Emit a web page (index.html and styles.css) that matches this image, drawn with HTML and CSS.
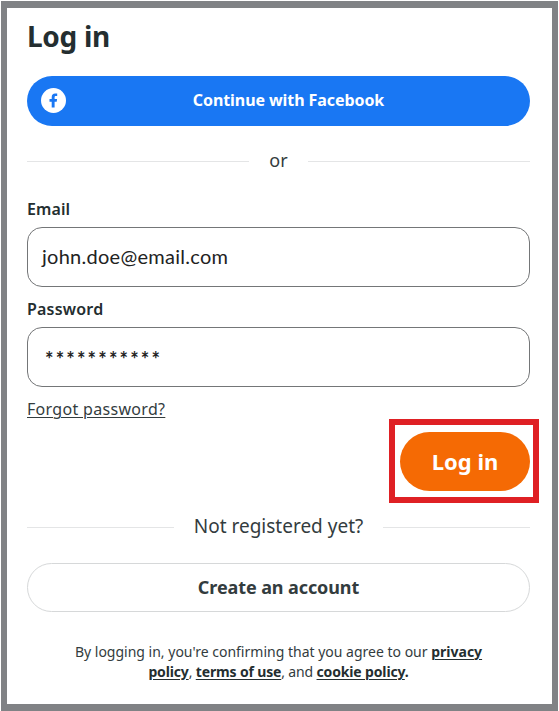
FILE: index.html
```html
<!DOCTYPE html>
<html lang="en">
<head>
<meta charset="utf-8">
<title>Log in</title>
<link rel="stylesheet" href="styles.css">
</head>
<body>
<main class="frame">
  <h1 class="title"><span>Log in</span></h1>
  <button class="facebook" type="button">
    <svg class="facebook-icon" viewBox="0 0 25 25" aria-hidden="true">
      <circle cx="12.5" cy="12.5" r="12.5" fill="#fff"/>
      <path d="M10.7 19.4V13.7H8.5V11H10.7V9.2C10.7 6.8 12 5.6 14.1 5.6H16.2V8.1H15C14 8.1 13.6 8.6 13.6 9.4V11H16.1L15.7 13.7H13.6V19.4Z" fill="#1977f3"/>
    </svg>
    <span class="facebook-text">Continue with Facebook</span>
  </button>
  <div class="divider or"><span>or</span></div>
  <form class="form">
    <label class="label email-label"><span>Email</span></label>
    <div class="field"><span class="email">john.doe@email.com</span></div>
    <label class="label password-label"><span>Password</span></label>
    <div class="field"><span class="password">***********</span></div>
    <div class="forgot"><a>Forgot password?</a></div>
    <div class="actions"><button class="login" type="button"><span>Log in</span></button></div>
  </form>
  <div class="divider register"><span>Not registered yet?</span></div>
  <button class="create" type="button"><span>Create an account</span></button>
  <p class="legal"><span class="legal-first">By logging in, you're confirming that you agree to our <a>privacy</a></span><br><span class="legal-second"><a>policy</a>, <a>terms of use</a>, and <a>cookie policy</a><b>.</b></span></p>
</main>
</body>
</html>
```
FILE: styles.css
```css
* { box-sizing: border-box; }
body {
  margin: 0;
  padding: 1px;
  background: #fff;
  color: #242e30;
  font-family: "Noto Sans", sans-serif;
}
.frame {
  height: 710px;
  width: 557px;
  border: 6px solid #808285;
  border-top-width: 7px;
  border-bottom-width: 7px;
  padding: 11px 22px 0 20px;
  white-space: nowrap;
}
button { font-family: inherit; padding: 0; border: 0; display: flex; align-items: center; }
.title { margin: 0; height: 57px; font-size: 28px; line-height: 34px; font-weight: 700; letter-spacing: -0.3px; }
.facebook {
  position: relative;
  width: 100%;
  height: 50px;
  border-radius: 25px;
  background: #1977f3;
  color: #fff;
  justify-content: center;
  font-size: 16px;
  line-height: 24px;
  font-weight: 700;
  letter-spacing: -0.08px;
}
.facebook-icon { position: absolute; left: 14px; top: 12px; width: 25px; height: 25px; }
.facebook-text { margin: 0 0 2px 20px; }
.divider { display: flex; align-items: center; color: #333c3e; }
.divider::before, .divider::after { content: ""; flex: 1; height: 1px; background: #e4e5e6; }
.or { height: 70px; gap: 20px; font-size: 18px; }
.or span { margin-top: -2px; }
.label { display: block; height: 31px; font-size: 16px; line-height: 24px; font-weight: 600; }
.email-label { padding-top: 1px; letter-spacing: 0.1px; }
.password-label { height: 40px; padding-top: 10px; letter-spacing: 0.2px; }
.field {
  height: 60px;
  border: 1px solid #747678;
  border-radius: 15px;
  padding: 0 14px;
  display: flex;
  align-items: center;
  color: #222;
  font-family: Lato, sans-serif;
  font-size: 20px;
}
.email { margin-bottom: 2px; letter-spacing: 0.27px; }
.password { margin: 3px 0 0 3px; font-weight: 700; letter-spacing: 2.15px; }
.forgot { height: 45px; padding-top: 10px; font-size: 16px; line-height: 24px; letter-spacing: 0.31px; color: #333c3e; }
.forgot a, .legal a { text-decoration: underline; text-underline-offset: 2px; text-decoration-thickness: 1px; }
.actions { display: flex; justify-content: flex-end; }
.login {
  position: relative;
  width: 130px;
  height: 59px;
  border-radius: 30px;
  justify-content: center;
  background: #f56a04;
  color: #fff;
  font-size: 22px;
  font-weight: 700;
}
.login span { margin-bottom: 2px; }
.login::after { content: ""; position: absolute; inset: -13px -9px -12px -11px; border: 6px solid #df2024; }
.register { height: 72px; gap: 20px; font-size: 19px; }
.register span { margin-bottom: 2px; }
.create {
  width: 100%;
  height: 49px;
  border: 1px solid #d6d8d9;
  border-radius: 25px;
  background: #fff;
  justify-content: center;
  color: #333c3e;
  font-size: 18px;
  font-weight: 700;
  letter-spacing: -0.1px;
}
.create span { margin-bottom: 2px; }
.legal { margin: 30px 0 0; text-align: center; font-size: 14px; line-height: 20px; color: #333c3e; }
.legal a, .legal b { font-weight: 700; color: #242e30; }
.legal-second { letter-spacing: -0.15px; }
```
